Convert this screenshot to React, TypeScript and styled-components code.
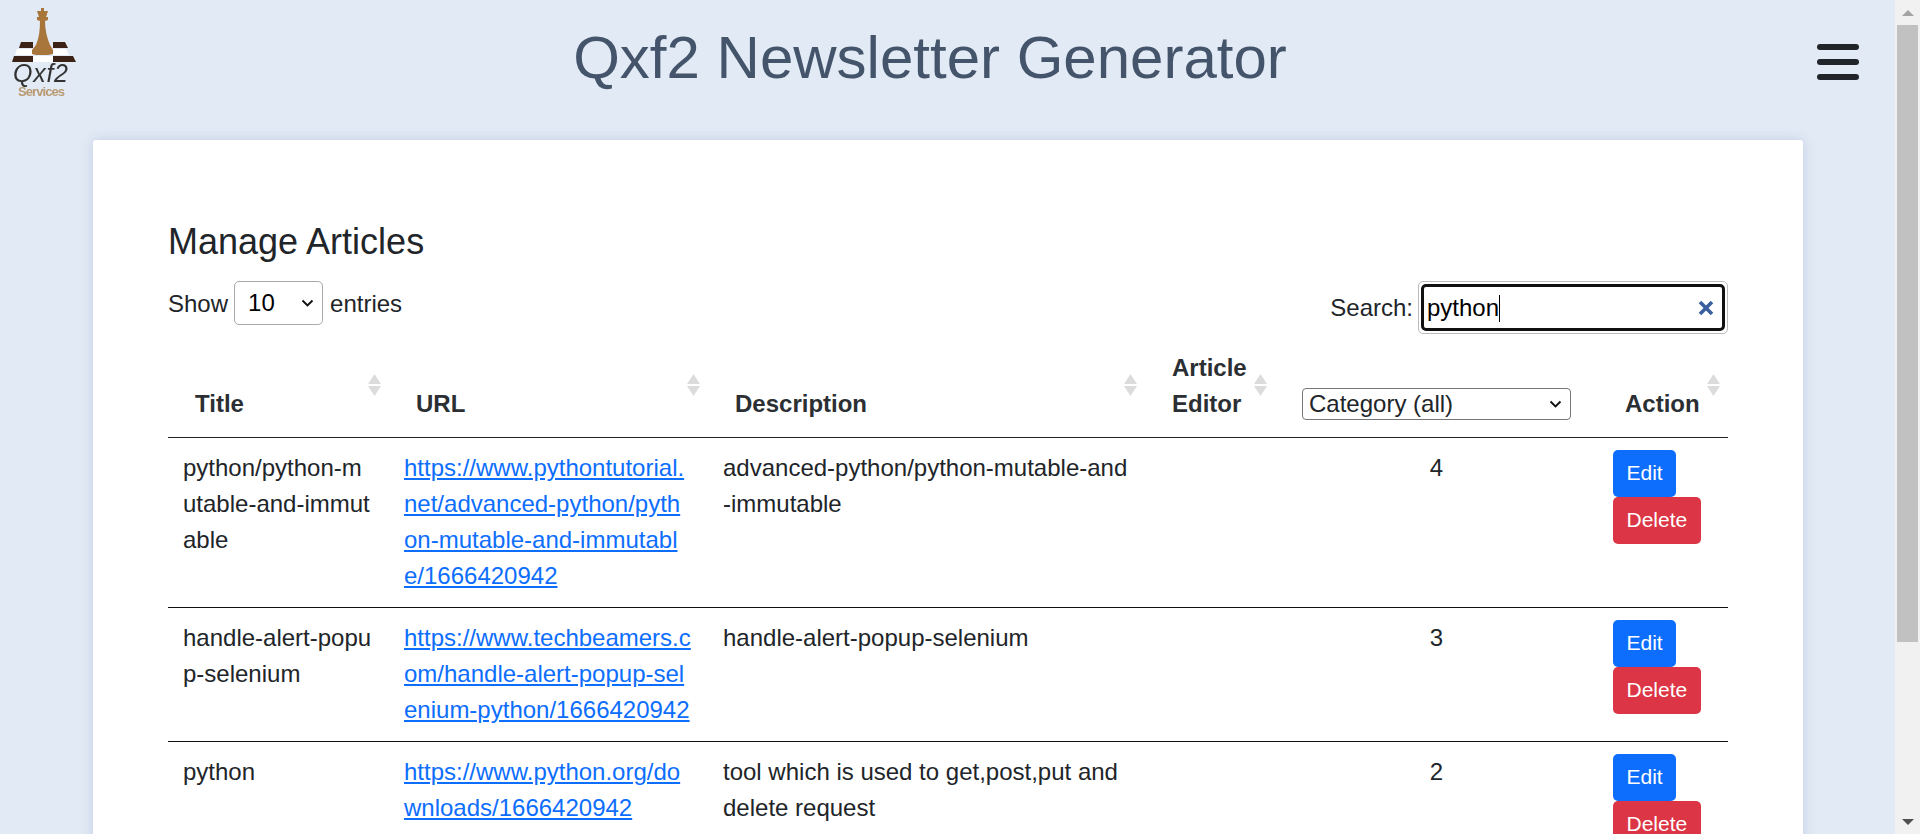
import styled, { createGlobalStyle, css } from "styled-components"

const GlobalStyle = createGlobalStyle`
  html, body {
    margin: 0;
    padding: 0;
    height: 100%;
    overflow: hidden;
  }
  body {
    font-family: "Liberation Sans", Arial, sans-serif;
    color: #212529;
    background: #e2eaf5;
  }
`

const chevron = css`
  appearance: none;
  background-color: #fff;
  background-image: url("data:image/svg+xml,%3Csvg xmlns='http://www.w3.org/2000/svg' width='13' height='8' viewBox='0 0 13 8'%3E%3Cpath d='M1.5 1.5 6.5 6.5 11.5 1.5' fill='none' stroke='%23111' stroke-width='1.9'/%3E%3C/svg%3E");
  background-repeat: no-repeat;
  background-position: right 8px center;
`

const Shell = styled.div`
  display: flex;
  height: 834px;
  overflow: hidden;
`

const Page = styled.div`
  flex: 1;
  min-width: 0;
  overflow: hidden;
`

const Header = styled.header`
  height: 140px;
  display: flex;
  align-items: flex-start;
  justify-content: space-between;
  padding: 0 36px 0 8px;
`

const Logo = styled.svg`
  width: 70px;
  height: 92px;
  margin-top: 8px;
  flex: none;
`

const Title = styled.h1`
  margin: 22px 35px 0 0;
  font-size: 60px;
  line-height: 72px;
  font-weight: 400;
  color: #44546a;
`

const Hamburger = styled.div`
  width: 42px;
  margin-top: 44px;
  display: flex;
  flex-direction: column;
  gap: 9px;
`

const Bar = styled.span`
  display: block;
  height: 6px;
  border-radius: 3px;
  background: #212529;
`

const Card = styled.main`
  margin: 0 92px 0 93px;
  padding: 81px 75px 0;
  background: #fff;
  border-radius: 3px;
  box-shadow: 0 0 12px rgba(120, 140, 190, 0.3);
  min-height: 694px;
`

const Heading = styled.h4`
  margin: 0;
  font-size: 36px;
  line-height: 42px;
  font-weight: 400;
`

const Controls = styled.div`
  display: flex;
  justify-content: space-between;
  align-items: flex-start;
  margin-top: 18px;
  font-size: 24px;
  line-height: 36px;
`

const Group = styled.label`
  display: flex;
  align-items: center;
  gap: 6px;
`

const LengthSelect = styled.select`
  ${chevron}
  width: 89px;
  height: 44px;
  margin: 0 1px 2px 0;
  padding: 0 0 0 13px;
  font: inherit;
  color: #000;
  border: 1px solid #aaa;
  border-radius: 5px;
`

const SearchBox = styled.div`
  width: 310px;
  height: 53px;
  margin-left: -1px;
  padding: 2px;
  box-sizing: border-box;
  border: 1px solid #bbb;
  border-radius: 5px;
  display: flex;
`

const SearchField = styled.div`
  flex: 1;
  display: flex;
  align-items: center;
  justify-content: space-between;
  padding: 0 8px 0 3px;
  border: 3px solid #111;
  border-radius: 5px;
  color: #000;
  line-height: 30px;
`

const Caret = styled.span`
  display: inline-block;
  width: 1px;
  height: 27px;
  background: #000;
  vertical-align: -6px;
`

const ClearIcon = styled.svg`
  width: 16px;
  height: 16px;
  flex: none;
`

const Table = styled.table`
  width: 1560px;
  margin-top: 11px;
  table-layout: fixed;
  border-collapse: collapse;
  font-size: 24px;
  line-height: 36px;
`

const Th = styled.th`
  position: relative;
  height: 92px;
  box-sizing: border-box;
  padding: 0 20px 15px 27px;
  font-weight: 700;
  text-align: left;
  vertical-align: bottom;
  border-bottom: 1px solid #212529;
  color: #2b2f33;
`

const SortMark = styled.svg`
  position: absolute;
  top: 28px;
  right: 8px;
  width: 13px;
  height: 24px;
`

const CategorySelect = styled.select`
  ${chevron}
  width: 269px;
  height: 32px;
  margin-bottom: 2px;
  padding: 0 0 0 6px;
  font: inherit;
  line-height: 28px;
  font-weight: 400;
  color: #212529;
  border: 1px solid #767676;
  border-radius: 4px;
  vertical-align: middle;
`

const Td = styled.td<{ $center?: boolean }>`
  padding: 12px 15px 13px;
  vertical-align: top;
  text-align: ${props => (props.$center ? "center" : "left")};
  word-break: break-all;
`

const Row = styled.tr`
  border-bottom: 1px solid #111;
`

const Link = styled.a`
  color: #0d6efd;
  text-decoration: underline;
`

const Button = styled.button<{ $danger?: boolean }>`
  display: block;
  height: 47px;
  padding: 0 13.5px;
  font-family: inherit;
  font-size: 21px;
  color: #fff;
  background: ${props => (props.$danger ? "#dc3545" : "#0d6efd")};
  border: 0;
  border-radius: 5px;
`

const Scrollbar = styled.div`
  flex: none;
  width: 25px;
  display: flex;
  flex-direction: column;
  align-items: center;
  background: #f1f1f1;
`

const Arrow = styled.div<{ $down?: boolean }>`
  flex: none;
  height: 25px;
  display: flex;
  align-items: center;
  justify-content: center;
  &::before {
    content: "";
    border-left: 6px solid transparent;
    border-right: 6px solid transparent;
    ${props => (props.$down ? "border-top" : "border-bottom")}: 6px solid ${props => (props.$down ? "#505050" : "#a3a3a3")};
  }
`

const Thumb = styled.div`
  width: 21px;
  height: 617px;
  background: #c1c1c1;
`

const Track = styled.div`
  flex: 1;
`

const articles = [
  {
    title: "python/python-mutable-and-immutable",
    url: "https://www.pythontutorial.net/advanced-python/python-mutable-and-immutable/1666420942",
    description: "advanced-python/python-mutable-and-immutable",
    category: 4,
  },
  {
    title: "handle-alert-popup-selenium",
    url: "https://www.techbeamers.com/handle-alert-popup-selenium-python/1666420942",
    description: "handle-alert-popup-selenium",
    category: 3,
  },
  {
    title: "python",
    url: "https://www.python.org/downloads/1666420942",
    description: "tool which is used to get,post,put and delete request",
    category: 2,
  },
]

const SortIcon = () => (
  <SortMark viewBox="0 0 13 24">
    <path d="M6.5 1 13 11H0Z" fill="#dcdcdc" />
    <path d="M6.5 23 13 13H0Z" fill="#dcdcdc" />
  </SortMark>
)

// drawn in page coordinates, the svg sits at (8, 8)
const QxfLogo = () => (
  <Logo viewBox="8 8 70 92">
    <defs>
      <filter id="soft">
        <feGaussianBlur stdDeviation="0.45" />
      </filter>
    </defs>
    <g filter="url(#soft)">
      <path d="M21 42h12v6H19zM53 42h12l3 6H53z" fill="#3a2416" />
      <path d="M17 49h16v6H15zM53 49h13l3 6H53z" fill="#fff" />
      <path d="M14 56h19v6H12zM53 56h20l3 6H53z" fill="#3a2416" />
      <path d="M33 56h20v6H33z" fill="#fff" />
      <path d="M41 8h3v3h4l-2 6h2v3l-3 1c0 9 2 17 5 24l3 5v4l-5 1H36l-4-1v-4l4-5c3-7 4-15 4-24l-3-1v-3h2l-2-6h4z" fill="#a8743a" />
      <text x="13" y="82" fontFamily="Liberation Sans" fontStyle="italic" fontSize="25" textLength="55" fill="#333">Qxf2</text>
      <text x="18" y="96" fontFamily="Liberation Sans" fontWeight="700" fontSize="13" textLength="47" fill="#b99a72">Services</text>
    </g>
  </Logo>
)

const App = () => {
  return (
    <Shell>
      <GlobalStyle />
      <Page>
        <Header>
          <QxfLogo />
          <Title>Qxf2 Newsletter Generator</Title>
          <Hamburger>
            <Bar />
            <Bar />
            <Bar />
          </Hamburger>
        </Header>
        <Card>
          <Heading>Manage Articles</Heading>
          <Controls>
            <Group>
              Show
              <LengthSelect defaultValue="10">
                <option>10</option>
              </LengthSelect>
              entries
            </Group>
            <Group>
              Search:
              <SearchBox>
                <SearchField>
                  <span>python<Caret /></span>
                  <ClearIcon viewBox="0 0 16 16">
                    <path d="M2 2 14 14M14 2 2 14" stroke="#3a5f9e" strokeWidth="3.6" />
                  </ClearIcon>
                </SearchField>
              </SearchBox>
            </Group>
          </Controls>
          <Table>
            <colgroup>
              <col style={{ width: 221 }} />
              <col style={{ width: 319 }} />
              <col style={{ width: 437 }} />
              <col style={{ width: 130 }} />
              <col style={{ width: 323 }} />
              <col style={{ width: 130 }} />
            </colgroup>
            <thead>
              <tr>
                <Th>Title<SortIcon /></Th>
                <Th>URL<SortIcon /></Th>
                <Th>Description<SortIcon /></Th>
                <Th>Article Editor<SortIcon /></Th>
                <Th>
                  <CategorySelect defaultValue="all">
                    <option value="all">Category (all)</option>
                  </CategorySelect>
                </Th>
                <Th>Action<SortIcon /></Th>
              </tr>
            </thead>
            <tbody>
              {articles.map(article => (
                <Row key={article.title}>
                  <Td>{article.title}</Td>
                  <Td><Link href="#">{article.url}</Link></Td>
                  <Td>{article.description}</Td>
                  <Td />
                  <Td $center>{article.category}</Td>
                  <Td>
                    <Button>Edit</Button>
                    <Button $danger>Delete</Button>
                  </Td>
                </Row>
              ))}
            </tbody>
          </Table>
        </Card>
      </Page>
      <Scrollbar>
        <Arrow />
        <Thumb />
        <Track />
        <Arrow $down />
      </Scrollbar>
    </Shell>
  )
}

export default App
